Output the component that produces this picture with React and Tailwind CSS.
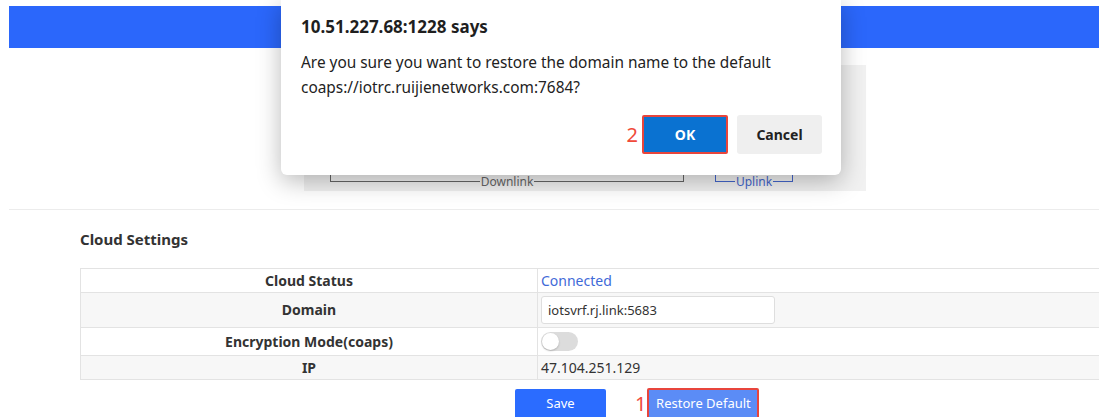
import React from "react";

// Row definitions for the cloud settings table
const rows = [
  { label: "Cloud Status", kind: "status", h: "h-[24px]", bg: "bg-white" },
  { label: "Domain", kind: "input", h: "h-[35px]", bg: "bg-[#f7f7f7]" },
  { label: "Encryption Mode(coaps)", kind: "toggle", h: "h-[28px]", bg: "bg-white" },
  { label: "IP", kind: "text", h: "h-[24px]", bg: "bg-[#f7f7f7]" },
];

const Bracket = ({ label, className, width }) => (
  <div className={`flex items-start ${width} ${className}`}>
    <div className="flex-1 h-[7px] border-l border-b border-current" />
    <span className="text-[12px] leading-[14px] px-[1px]">{label}</span>
    <div className="flex-1 h-[7px] border-r border-b border-current" />
  </div>
);

const ValueCell = ({ kind }) => {
  if (kind === "status") return <span className="text-[#3f6ad8]">Connected</span>;
  if (kind === "input")
    return (
      <div className="w-[234px] h-[28px] bg-white border border-[#dedede] rounded-[3px] flex items-center pl-[6px] text-[13px] text-[#333]">
        iotsvrf.rj.link:5683
      </div>
    );
  if (kind === "toggle")
    return (
      <div className="w-[37px] h-[19px] rounded-full bg-[#dcdcdc] flex items-center pl-[1px]">
        <div className="w-[17px] h-[17px] rounded-full bg-white shadow-[0_1px_2px_rgba(0,0,0,0.2)]" />
      </div>
    );
  return <span>47.104.251.129</span>;
};

export default function App() {
  return (
    <div className="relative w-[1099px] h-[417px] overflow-hidden bg-white text-[#333] font-['Noto_Sans','Open_Sans',sans-serif]">
      {/* page body */}
      <div className="pl-[9px] pt-[6px]">
        <div className="h-[42px] bg-[#2b67fb]" />
        <div className="pl-[295px] pt-[17px]">
          <div className="w-[562px] h-[126px] bg-[#f1f1f1] pt-[110px] pl-[26px] flex gap-[31px]">
            <Bracket label="Downlink" width="w-[354px]" className="text-[#666]" />
            <Bracket label="Uplink" width="w-[78px]" className="text-[#4466cc]" />
          </div>
        </div>
        <div className="mt-[18px] border-t border-[#ececec]" />
      </div>

      <div className="pl-[80px]">
        <h2 className="mt-[19px] text-[15px] font-bold leading-[20px] text-[#333]">Cloud Settings</h2>
        <table className="mt-[19px] w-[1040px] border-collapse text-[14px]">
          <tbody>
            {rows.map((r) => (
              <tr key={r.label} className={`${r.h} ${r.bg}`}>
                <td className="w-[457px] border border-[#e3e3e3] text-center font-bold leading-[18px] p-0">
                  {r.label}
                </td>
                <td className="border border-[#e3e3e3] pl-[3px] leading-[18px] p-0">
                  <ValueCell kind={r.kind} />
                </td>
              </tr>
            ))}
          </tbody>
        </table>
        <div className="mt-[9px] flex items-start pl-[435px]">
          <button className="w-[91px] h-[30px] bg-[#2b6cff] text-white text-[13px] rounded-[2px]">Save</button>
          <span className="ml-[29px] mt-[3px] text-[20px] leading-[24px] text-[#f04a3a]">1</span>
          <button className="ml-[1px] -mt-[1px] w-[112px] h-[31px] bg-[#5b8cf6] text-white text-[13px] border-2 border-[#e8453c] rounded-[2px]">
            Restore Default
          </button>
        </div>
      </div>

      {/* confirm dialog */}
      <div className="absolute left-[281px] top-0 w-[560px] h-[175px] bg-white rounded-b-[6px] shadow-[0_6px_24px_rgba(0,0,0,0.28)] pl-[20px] pr-[19px]">
        <div className="pt-[16px] text-[17px] font-bold leading-[22px] text-[#1f1f1f]">10.51.227.68:1228 says</div>
        <p className="mt-[12px] text-[15.4px] leading-[25px] text-[#222]">
          Are you sure you want to restore the domain name to the default
          <br />
          coaps://iotrc.ruijienetworks.com:7684?
        </p>
        <div className="mt-[15px] flex items-center justify-end">
          <span className="mr-[4px] text-[20px] leading-[24px] text-[#f04a3a]">2</span>
          <button className="w-[86px] h-[39px] bg-[#0a72d1] text-white text-[14px] font-bold border-2 border-[#e8453c] rounded-[2px]">
            OK
          </button>
          <button className="ml-[9px] w-[85px] h-[39px] bg-[#efefef] text-[#222] text-[14px] font-bold rounded-[3px]">
            Cancel
          </button>
        </div>
      </div>
    </div>
  );
}
